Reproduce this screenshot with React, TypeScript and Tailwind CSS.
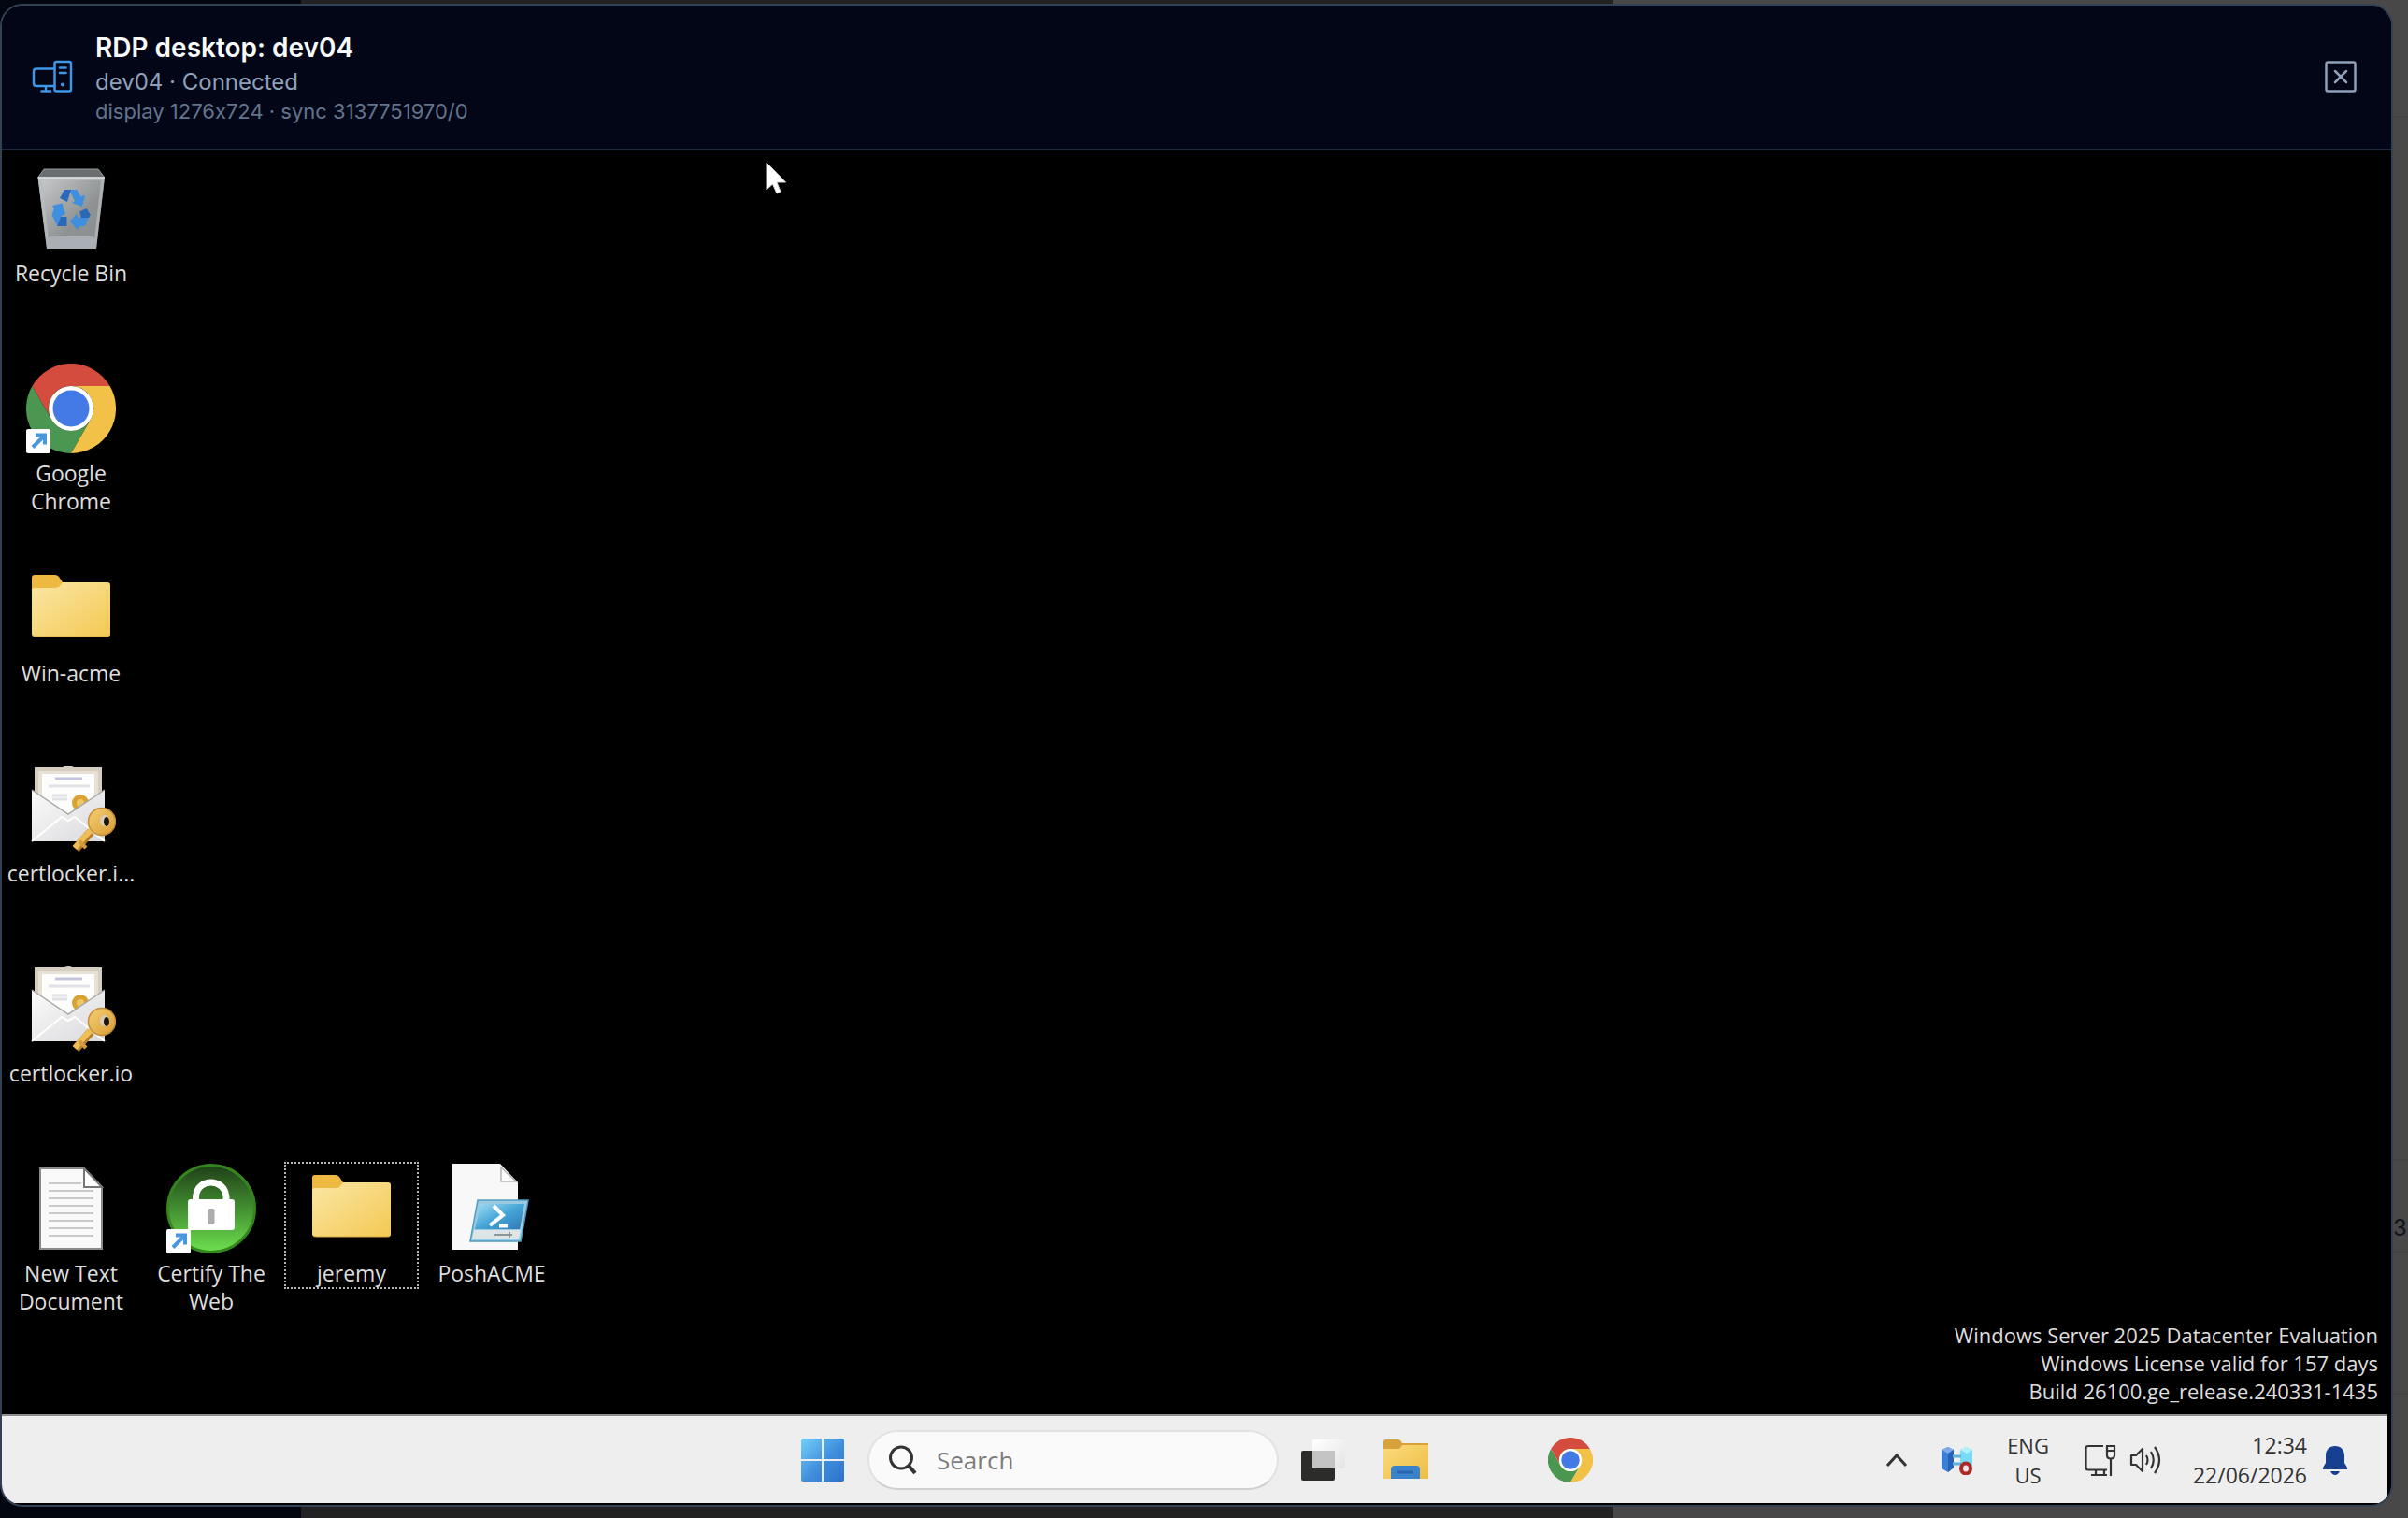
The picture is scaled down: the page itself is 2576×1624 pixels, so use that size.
import type { ReactNode } from "react";

type DesktopItem = {
  name: string;
  icon: ReactNode;
  selected?: boolean;
};

const ShortcutBadge = () => (
  <>
    <rect x="0" y="70" width="26" height="26" rx="2" fill="#fdfdfe" />
    <path d="M7 89.500 18 78.500" stroke="#4a97dc" strokeWidth="4" fill="none" />
    <path d="M10 76.500H20V86.500" stroke="#4a97dc" strokeWidth="4" fill="none" />
  </>
);

const ChromeIcon = ({ className, shortcut }: { className: string; shortcut?: boolean }) => (
  <svg className={className} viewBox="0 0 96 96" aria-hidden="true">
    <path d="M6.400 24A48 48 0 0 1 89.600 24H48A24 24 0 0 0 27.200 60Z" fill="#d44c3d" />
    <path d="M6.400 24A48 48 0 0 0 48 96L68.800 60A24 24 0 0 1 27.200 60Z" fill="#4b9650" />
    <path d="M48 96A48 48 0 0 0 89.600 24H48A24 24 0 0 1 68.800 60Z" fill="#f2c148" />
    <circle cx="48" cy="48" r="24" fill="#fff" />
    <circle cx="48" cy="48" r="19.500" fill="#447ae6" />
    {shortcut && <ShortcutBadge />}
  </svg>
);

const RecycleBinIcon = () => (
  <svg className="size-24" viewBox="0 0 96 96" aria-hidden="true">
    <defs>
      <linearGradient id="bin" x1="0" y1="0" x2="1" y2="1">
        <stop offset="0" stopColor="#c9cbcc" />
        <stop offset="0.6" stopColor="#8f9293" />
        <stop offset="1" stopColor="#8b8e90" />
      </linearGradient>
    </defs>
    <path d="M19 6H77L84 15H12.500Z" fill="#6b6e70" stroke="#97999b" />
    <path d="M12.500 14.500H84L75 91H22Z" fill="url(#bin)" />
    <path d="M12.500 14.500H84L75 91H72L80 18H17L25 91H22Z" fill="#b9bdc0" opacity="0.7" />
    <path d="M13 15H84" stroke="#dcdedf" strokeWidth="1.500" />
    <path d="M26 78H71L75 82V91H22V82Z" fill="#a9afb5" />
    <g fill="#3f8fe0">
      <path d="M44 28H54.300L58 35 63 34 60 46 49 42 52 40 47 30Z" />
      <path d="M28 45 38.500 42.500 42 54 38 56 33 66 27.500 55 30 48Z" />
      <path d="M67 57 63 67H57L55 71 47 62 54 53.500 55.500 58Z" />
    </g>
    <g fill="#2a68b8">
      <path d="M41 28H48L44 41 36 37Z" />
      <path d="M37 57H43.500V67H33Z" />
      <path d="M57 51.500 64.500 48 69 55 67 58H59Z" />
    </g>
  </svg>
);

const FolderIcon = () => (
  <svg className="size-24" viewBox="0 0 96 96" aria-hidden="true">
    <defs>
      <linearGradient id="folder" x1="0" y1="0" x2="1" y2="1">
        <stop offset="0" stopColor="#fae6a4" />
        <stop offset="1" stopColor="#f4c954" />
      </linearGradient>
    </defs>
    <path d="M6 15q0-3 3-3H31q2 0 4 2l4 6V30H6Z" fill="#edb941" />
    <path
      d="M6 28q0-2 3-2H31q3 0 5-2l3-4H87q3 0 3 3V75q0 3-3 3H9q-3 0-3-3Z"
      fill="url(#folder)"
    />
    <path d="M7 76.500q1 1.500 3 1.500H87q2 0 3-2" stroke="#d9a945" fill="none" />
  </svg>
);

const CertificateIcon = () => (
  <svg className="size-24" viewBox="0 0 96 96" aria-hidden="true">
    <defs>
      <linearGradient id="envelope" x1="0" y1="0" x2="1" y2="1">
        <stop offset="0" stopColor="#fbfbfb" />
        <stop offset="1" stopColor="#d9d9dc" />
      </linearGradient>
      <linearGradient id="key" x1="0" y1="0" x2="1" y2="1">
        <stop offset="0" stopColor="#f5cf74" />
        <stop offset="1" stopColor="#d99c35" />
      </linearGradient>
    </defs>
    <path d="M9 4H39q6-4 12 0H81V60H9Z" fill="#d5cdc0" />
    <path d="M13 8H77V60H13Z" fill="#e6e0d5" />
    <path d="M17 11H73V60H17Z" fill="#fdfdfb" />
    <path d="M31 16H60" stroke="#c3c5dc" strokeWidth="3" />
    <path d="M24 24H68M28 34H44M28 38H44" stroke="#e1e1e8" strokeWidth="3" />
    <circle cx="58" cy="42" r="9" fill="#d9a232" />
    <circle cx="58" cy="42" r="4" fill="#edc869" />
    <path d="M6 28 45 54 84 28V83H6Z" fill="url(#envelope)" />
    <path d="M6 28 45 54 84 28" stroke="#a9a9a9" strokeWidth="1.500" fill="none" />
    <path d="M6 83 38 57 45 61 52 57 84 83" stroke="#fff" strokeWidth="2" fill="none" />
    <path d="M69 73 53 91" stroke="#b87f2a" strokeWidth="9" />
    <path d="M69 71 52 90" stroke="#efbe57" strokeWidth="6" />
    <path d="M57 83 64 90" stroke="#d39b3c" strokeWidth="4" />
    <circle cx="81" cy="62" r="14.500" fill="url(#key)" stroke="#c48d38" strokeWidth="1.500" />
    <ellipse cx="84" cy="61" rx="5" ry="6" fill="#d8cdb9" />
    <ellipse cx="86" cy="62" rx="3" ry="5" fill="#1b150b" />
  </svg>
);

const TextDocumentIcon = () => (
  <svg className="size-24" viewBox="0 0 96 96" aria-hidden="true">
    <path d="M15 5H62L81 25V91H15Z" fill="#f9f9f9" stroke="#8a8a8a" strokeWidth="2" />
    <path d="M62 5V25H81Z" fill="#fff" stroke="#777" strokeWidth="2" />
    <path
      d="M24 21H59M24 29H72M24 37H72M24 45H72M24 53H72M24 61H72M24 69H72M24 77H72"
      stroke="#c9c9c9"
      strokeWidth="2"
    />
  </svg>
);

const CertifyIcon = () => (
  <svg className="size-24" viewBox="0 0 96 96" aria-hidden="true">
    <defs>
      <linearGradient id="certify" x1="0" y1="0" x2="0" y2="1">
        <stop offset="0" stopColor="#1f3f18" />
        <stop offset="0.500" stopColor="#438f31" />
        <stop offset="1" stopColor="#6de04f" />
      </linearGradient>
    </defs>
    <circle cx="48" cy="48" r="46.500" fill="url(#certify)" stroke="#35851f" strokeWidth="3" />
    <path d="M31.500 40V35C33 15 62 15 64 35V40" stroke="#fff" strokeWidth="7" fill="none" />
    <rect x="23" y="38" width="50" height="33" rx="3" fill="#fff" />
    <rect x="44.500" y="48" width="7" height="17" rx="2" fill="#adadad" />
    <ShortcutBadge />
  </svg>
);

const PowerShellIcon = () => (
  <svg className="size-24" viewBox="0 0 96 96" aria-hidden="true">
    <defs>
      <linearGradient id="posh" x1="0" y1="0" x2="1" y2="1">
        <stop offset="0" stopColor="#a5def3" />
        <stop offset="0.500" stopColor="#46a6d8" />
        <stop offset="1" stopColor="#2f77b4" />
      </linearGradient>
    </defs>
    <path d="M6 0H57L76 20V92H6Z" fill="#f8f8f8" />
    <path d="M58 4V19H74Z" fill="#fff" stroke="#b5b5b5" strokeWidth="1.500" />
    <path d="M33 39H87L79 83H25Z" fill="#9bcbe0" stroke="#4f9cc2" strokeWidth="1.500" />
    <path d="M36 43H83L78 70H30Z" fill="url(#posh)" />
    <path d="M29 71H79L77 80H27Z" fill="#dfe4e6" />
    <path d="M51 76H70M67 73V79" stroke="#8f9698" strokeWidth="2" />
    <path d="M50 45 60 55 46 66" stroke="#fff" strokeWidth="4" fill="none" />
    <path d="M56 66.500H65" stroke="#fff" strokeWidth="4" />
  </svg>
);

const WindowsIcon = () => (
  <svg className="size-[46px]" viewBox="0 0 46 46" aria-hidden="true">
    <defs>
      <linearGradient id="win" gradientUnits="userSpaceOnUse" x1="0" y1="0" x2="46" y2="46">
        <stop offset="0" stopColor="#72d0fa" />
        <stop offset="0.550" stopColor="#3f8ddb" />
        <stop offset="1" stopColor="#2f72ca" />
      </linearGradient>
    </defs>
    <path d="M2 0H22V22H0V2Q0 0 2 0Z" fill="url(#win)" />
    <path d="M24 0H44Q46 0 46 2V22H24Z" fill="url(#win)" />
    <path d="M0 24H22V46H2Q0 46 0 44Z" fill="url(#win)" />
    <path d="M24 24H46V44Q46 46 44 46H24Z" fill="url(#win)" />
  </svg>
);

const TaskViewIcon = () => (
  <svg className="size-12" viewBox="0 0 48 48" aria-hidden="true">
    <defs>
      <linearGradient id="pane" x1="0" y1="0" x2="1" y2="1">
        <stop offset="0" stopColor="#fff" />
        <stop offset="1" stopColor="#e4e4e4" />
      </linearGradient>
    </defs>
    <rect x="0" y="14" width="36" height="32" rx="2" fill="#2c2c2b" />
    <rect x="12" y="2" width="35" height="31" rx="2" fill="url(#pane)" />
    <path d="M12 14H36V33H14Q12 33 12 31Z" fill="#c3c3c3" />
  </svg>
);

const ExplorerIcon = () => (
  <svg className="size-12" viewBox="0 0 48 48" aria-hidden="true">
    <defs>
      <linearGradient id="explorer" x1="0" y1="0" x2="1" y2="1">
        <stop offset="0" stopColor="#fadb7e" />
        <stop offset="1" stopColor="#efbc41" />
      </linearGradient>
    </defs>
    <path d="M0 5q0-3 3-3H16q2 0 4 4H48V16H0Z" fill="#d7a23a" />
    <path d="M0 12H16q2 0 4-4H48V44H0Z" fill="url(#explorer)" />
    <path d="M8 44V34q0-4 4-4H35q4 0 4 4V44Z" fill="#3a83cb" />
    <path d="M15 37H32" stroke="#2b65ad" strokeWidth="3" />
  </svg>
);

const DesktopTowerIcon = () => (
  <svg
    className="h-9 w-11 shrink-0"
    viewBox="-1 -1 44 36"
    fill="none"
    stroke="#3f97e8"
    strokeWidth="2.500"
    strokeLinecap="round"
    strokeLinejoin="round"
    aria-hidden="true"
  >
    <path d="M23 8.500H4Q1 8.500 1 11.500V24Q1 27 4 27H23M14 27V32M9.500 32.500H19" />
    <rect x="23.500" y="1" width="17.500" height="31.500" rx="2" />
    <path d="M29 7.500H35.500M29 13H35.500" />
    <circle cx="32" cy="25.500" r="0.800" fill="#3f97e8" />
  </svg>
);

const RemoteStatusIcon = () => (
  <svg className="h-8 w-[34px]" viewBox="0 0 34 32" aria-hidden="true">
    <path d="M0 5 7 2 13 5V24L7 29 0 25Z" fill="#3a7fd8" />
    <path d="M0 5 7 2 13 5 7 9Z" fill="#7fa9ea" />
    <path d="M7 9 13 5V24L7 29Z" fill="#2763b4" />
    <path d="M20 5 26 2 33 5V22H20Z" fill="#79dcf6" />
    <path d="M20 5 26 2 33 5 27 9Z" fill="#b4effb" />
    <path d="M12 12H21M12 20H21" stroke="#5fb2dd" strokeWidth="3" />
    <ellipse cx="26" cy="25" rx="5" ry="5.500" fill="#f3e6e6" stroke="#ad2a2a" strokeWidth="4" />
  </svg>
);

const NetworkIcon = () => (
  <svg
    className="size-[34px]"
    viewBox="0 0 34 34"
    fill="none"
    stroke="#333"
    strokeWidth="2.200"
    aria-hidden="true"
  >
    <path d="M20 2H4Q1.500 2 1.500 4.500V25Q1.500 27.500 4 27.500H24" />
    <path d="M12 28V33M21 28V33M7 33H24M28 16V34" />
    <path d="M24 2H32V12Q32 15.500 28 15.500 24 15.500 24 12ZM24 7H32" />
  </svg>
);

const VolumeIcon = () => (
  <svg
    className="h-[34px] w-9"
    viewBox="0 0 36 34"
    fill="none"
    stroke="#333"
    strokeWidth="2.200"
    strokeLinejoin="round"
    aria-hidden="true"
  >
    <path d="M2 12H7L14 5V29L7 22H2Z" />
    <path d="M18 12Q21 17 18 22M23 8Q28.500 17 23 26M27 3Q37 17 27 31" />
  </svg>
);

const BellIcon = () => (
  <svg className="h-8 w-7" viewBox="0 0 28 32" fill="#173f8f" aria-hidden="true">
    <path d="M14 1C8 1 4 5 4 11V19L1 24V26H27V24L24 19V11C24 5 20 1 14 1Z" />
    <path d="M9 28H19Q17 32 14 32 11 32 9 28Z" />
  </svg>
);

const desktopItems: DesktopItem[] = [
  { name: "Recycle Bin", icon: <RecycleBinIcon /> },
  { name: "Google Chrome", icon: <ChromeIcon className="size-24" shortcut /> },
  { name: "Win-acme", icon: <FolderIcon /> },
  { name: "certlocker.i...", icon: <CertificateIcon /> },
  { name: "certlocker.io", icon: <CertificateIcon /> },
];

const bottomRowItems: DesktopItem[] = [
  { name: "New Text Document", icon: <TextDocumentIcon /> },
  { name: "Certify The Web", icon: <CertifyIcon /> },
  { name: "jeremy", icon: <FolderIcon />, selected: true },
  { name: "PoshACME", icon: <PowerShellIcon /> },
];

const watermark = [
  "Windows Server 2025 Datacenter Evaluation",
  "Windows License valid for 157 days",
  "Build 26100.ge_release.240331-1435",
];

const DesktopIcon = ({ item }: { item: DesktopItem }) => (
  <button
    className={`flex w-36 flex-col items-center self-start border-2 border-dotted ${
      item.selected ? "border-[#b5b5b5]" : "border-transparent"
    }`}
  >
    {item.icon}
    <span className="mt-1.5 text-center text-[23px] leading-[30px] text-[#dedede]">
      {item.name}
    </span>
  </button>
);

const Backdrop = () => (
  <div className="flex h-full">
    <div className="w-[322px] bg-[#02060e]" />
    <div className="w-[1404px] bg-[#222222]" />
    <div className="flex flex-1 justify-end bg-[#484848]">
      <div className="flex w-4 flex-col font-['Inter',sans-serif] text-2xl text-[#10131c]">
        <div className="h-[126px] border-b-2 border-[#434343]" />
        <div className="h-[1116px] border-b-2 border-[#434343]" />
        <div className="flex h-[98px] items-end border-b-2 border-[#434343] pb-2">3</div>
        <div className="h-[152px] border-b-2 border-[#434343]" />
      </div>
    </div>
  </div>
);

const SessionHeader = () => (
  <header className="flex items-center gap-6 border-b-2 border-[#1e293b] bg-[#020617] px-8 pt-[25px] pb-[26px] font-['Inter',sans-serif]">
    <DesktopTowerIcon />
    <div className="flex-1 [font-variant-ligatures:none]">
      <h1 className="text-[28px] leading-10 font-semibold text-slate-50">RDP desktop: dev04</h1>
      <p className="text-2xl leading-[34px] text-slate-400">dev04 · Connected</p>
      <p className="text-[22px] leading-7 text-slate-500">display 1276x724 · sync 3137751970/0</p>
    </div>
    <button aria-label="Close" className="p-1 text-slate-400">
      <svg className="size-9" viewBox="0 0 36 36" fill="none" stroke="currentColor" aria-hidden="true">
        <rect x="2.500" y="2.500" width="31" height="31" rx="2" strokeWidth="2.500" />
        <path d="M12 12 24 24M24 12 12 24" strokeWidth="2.500" strokeLinecap="round" />
      </svg>
    </button>
  </header>
);

const RemoteDesktop = () => (
  <main className="relative flex flex-1 items-start justify-between bg-black pt-3 pl-0.5">
    <div className="flex flex-col">
      {desktopItems.map((item) => (
        <div key={item.name} className="flex h-[214px]">
          <DesktopIcon item={item} />
        </div>
      ))}
      <div className="flex gap-1.5">
        {bottomRowItems.map((item) => (
          <DesktopIcon key={item.name} item={item} />
        ))}
      </div>
    </div>
    <div className="self-end pr-3.5 pb-2.5 text-right text-[22px] leading-[30px] text-[#dedede]">
      {watermark.map((line) => (
        <p key={line}>{line}</p>
      ))}
    </div>
    {/* remote pointer */}
    <svg className="absolute top-3 left-[816px] h-9 w-6" viewBox="0 0 24 36" aria-hidden="true">
      <path d="M2 1V30L8.500 24 13 34 17 32 13 22H22.500Z" fill="#fff" stroke="#d8d8e0" />
    </svg>
  </main>
);

const Taskbar = () => (
  <footer className="mr-1 grid h-[95px] grid-cols-[1fr_auto_1fr] items-center border-t-2 border-[#8d8d8d] bg-[#eeeeee] pl-1 text-[#333]">
    <div />
    <div className="flex items-center">
      <button aria-label="Start" className="flex w-22 justify-center">
        <WindowsIcon />
      </button>
      <label className="mx-1 flex h-16 w-[440px] items-center gap-5 rounded-full border-2 border-[#e2e2e2] border-b-[#cfcfcf] bg-[#fafafa] px-5">
        <svg className="size-8 shrink-0" viewBox="0 0 32 32" fill="none" stroke="#333" aria-hidden="true">
          <circle cx="14" cy="13.500" r="11.500" strokeWidth="3" />
          <path d="M22 22 29 30" strokeWidth="4" />
        </svg>
        <input
          type="text"
          aria-label="Search"
          placeholder="Search"
          className="min-w-0 flex-1 bg-transparent text-[26px] leading-8 outline-none placeholder:text-[#7c7c7c]"
        />
      </label>
      <button aria-label="Task view" className="flex w-22 justify-center">
        <TaskViewIcon />
      </button>
      <button aria-label="File Explorer" className="flex w-22 justify-center">
        <ExplorerIcon />
      </button>
      <div className="w-22" />
      <button aria-label="Google Chrome" className="flex w-22 justify-center">
        <ChromeIcon className="size-12" />
      </button>
    </div>
    <div className="flex items-center justify-end pr-[42px]">
      <button aria-label="Show hidden icons" className="mr-9">
        <svg className="h-4 w-6" viewBox="0 0 24 16" fill="none" stroke="#333" strokeWidth="3" aria-hidden="true">
          <path d="M2 14 12 3 22 14" />
        </svg>
      </button>
      <button aria-label="Connection status" className="mr-9">
        <RemoteStatusIcon />
      </button>
      <button className="mr-9.5 text-center text-[22px] leading-8">
        ENG
        <br />
        US
      </button>
      <button aria-label="Network and volume" className="mr-8 flex items-center gap-3.5">
        <NetworkIcon />
        <VolumeIcon />
      </button>
      <button className="mr-4 text-right text-[23px] leading-8">
        12:34
        <br />
        22/06/2026
      </button>
      <button aria-label="Notifications">
        <BellIcon />
      </button>
    </div>
  </footer>
);

const App = () => {
  return (
    <div className="relative h-screen overflow-hidden font-['Open_Sans',sans-serif]">
      <Backdrop />
      <section className="absolute top-1 right-4 bottom-3 left-0 flex flex-col overflow-hidden rounded-3xl border-2 border-[#334155] bg-black pb-0.5">
        <SessionHeader />
        <RemoteDesktop />
        <Taskbar />
      </section>
    </div>
  );
};

export default App;
